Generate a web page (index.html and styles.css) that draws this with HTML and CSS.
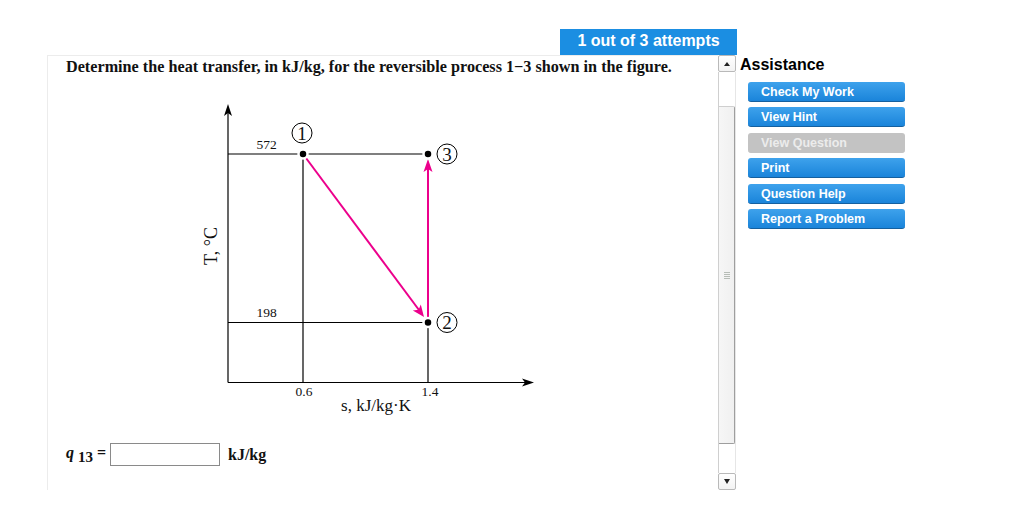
FILE: index.html
```html
<!DOCTYPE html>
<html>
<head>
<meta charset="utf-8">
<link rel="stylesheet" href="styles.css">
</head>
<body>
<div class="page">
  <div class="main">
    <div class="attempts-row"><div class="attempts">1 out of 3 attempts</div></div>
    <div class="content-row">
      <div class="pane">
        <p class="question">Determine the heat transfer, in kJ/kg, for the reversible process 1&minus;3 shown in the figure.</p>
        <svg class="chart" width="360" height="320" viewBox="190 100 360 320" xmlns="http://www.w3.org/2000/svg">
          <g stroke="#000" stroke-width="1.2" fill="none">
            <line x1="228" y1="110" x2="228" y2="382.5"/>
            <line x1="228" y1="382.5" x2="528" y2="382.5"/>
            <line x1="228" y1="154" x2="428" y2="154"/>
            <line x1="228" y1="322.5" x2="428" y2="322.5"/>
            <line x1="303" y1="154" x2="303" y2="382.5"/>
            <line x1="428" y1="322.5" x2="428" y2="382.5"/>
          </g>
          <polygon points="228,104 224,116 228,113 232,116" fill="#000"/>
          <polygon points="534,382.5 522,378.5 525,382.5 522,386.5" fill="#000"/>
          <g stroke="#ec008c" stroke-width="2" fill="none">
            <line x1="303" y1="154" x2="419" y2="310"/>
            <line x1="428" y1="322" x2="428" y2="168"/>
          </g>
          <polygon points="424,317 412.8,310.4 418.6,309.8 420.8,304.4" fill="#ec008c"/>
          <polygon points="428,159 423.5,172 428,169 432.5,172" fill="#ec008c"/>
          <g fill="#000" stroke="#fff" stroke-width="2.5">
            <circle cx="303" cy="154" r="4.5"/>
            <circle cx="428" cy="154" r="4.5"/>
            <circle cx="428" cy="322.5" r="4.5"/>
          </g>
          <g fill="none" stroke="#000" stroke-width="1">
            <circle cx="302" cy="133" r="10"/>
            <circle cx="447" cy="154" r="10"/>
            <circle cx="447" cy="322.5" r="10"/>
          </g>
          <g class="svgtxt" font-size="19" text-anchor="middle">
            <text x="302" y="139.5">1</text>
            <text x="447" y="160.5">3</text>
            <text x="447" y="329">2</text>
          </g>
          <g class="svgtxt" font-size="13.5" text-anchor="middle">
            <text x="266.5" y="148.5">572</text>
            <text x="266.5" y="316.5">198</text>
            <text x="304" y="396">0.6</text>
            <text x="430" y="396">1.4</text>
          </g>
          <text class="svgtxt" x="376" y="411" font-size="17" text-anchor="middle">s, kJ/kg·K</text>
          <text class="svgtxt" font-size="18" text-anchor="middle" transform="translate(217 246) rotate(-90)">T, °C</text>
        </svg>
        <div class="answer">
          <span class="qlabel"><i>q</i> <sub>13</sub> =</span>
          <span class="input"></span>
          <span class="unit">kJ/kg</span>
        </div>
      </div>
      <div class="scrollbar">
        <div class="sb-btn"><span class="tri-up"></span></div>
        <div class="sb-track">
          <div class="sb-thumb"><span class="grip"></span></div>
        </div>
        <div class="sb-btn"><span class="tri-down"></span></div>
      </div>
    </div>
  </div>
  <aside class="assist">
    <h2 class="assist-title">Assistance</h2>
    <div class="btns">
      <div class="btn">Check My Work</div>
      <div class="btn">View Hint</div>
      <div class="btn disabled">View Question</div>
      <div class="btn">Print</div>
      <div class="btn">Question Help</div>
      <div class="btn">Report a Problem</div>
    </div>
  </aside>
</div>
</body>
</html>
```
FILE: styles.css
```css
html, body {
  margin: 0;
  padding: 0;
  background: #fff;
}
body {
  font-family: "Liberation Sans", Arial, sans-serif;
  width: 1024px;
  height: 507px;
  overflow: hidden;
}
.page {
  display: flex;
  padding: 29px 0 0 47px;
}
.main {
  width: 690px;
  display: flex;
  flex-direction: column;
}
.attempts-row {
  display: flex;
  justify-content: flex-end;
}
.attempts {
  width: 177px;
  height: 26px;
  background: #1b8ee2;
  color: #fff;
  font-size: 16px;
  font-weight: bold;
  display: flex;
  align-items: center;
  justify-content: center;
  box-sizing: border-box;
  padding-bottom: 2px;
}
.content-row {
  display: flex;
  height: 435px;
}
.pane {
  width: 671px;
  box-sizing: border-box;
  border-top: 1px solid #ececec;
  border-left: 1px solid #ececec;
  padding-left: 18px;
}
.question {
  margin: 2px 0 0 0;
  font-family: "Liberation Serif", "Times New Roman", serif;
  font-weight: bold;
  font-size: 16.2px;
  line-height: 19px;
  color: #111;
}
.chart {
  display: block;
  margin: 23px 0 0 124px;
}
.svgtxt {
  font-family: "Liberation Serif", "Times New Roman", serif;
  fill: #111;
}
.answer {
  display: flex;
  align-items: center;
  margin-top: 23px;
  font-family: "Liberation Serif", "Times New Roman", serif;
  font-weight: bold;
  font-size: 16px;
  color: #111;
}
.qlabel {
  white-space: nowrap;
  width: 44px;
}
.qlabel sub {
  font-size: 15px;
  vertical-align: -4px;
}
.input {
  width: 110px;
  height: 23px;
  box-sizing: border-box;
  border: 1px solid #8a8a8a;
  background: #fff;
  margin-right: 8px;
}
.unit {
  font-size: 16px;
}
.scrollbar {
  width: 18px;
  display: flex;
  flex-direction: column;
  box-sizing: border-box;
}
.sb-btn {
  height: 17px;
  border: 1px solid #b9b9b9;
  border-radius: 2px;
  background: linear-gradient(#ffffff, #f3f3f3);
  display: flex;
  align-items: center;
  justify-content: center;
  box-sizing: border-box;
}
.tri-up {
  width: 0; height: 0;
  border-left: 3px solid transparent;
  border-right: 3px solid transparent;
  border-bottom: 4px solid #222;
}
.tri-down {
  width: 0; height: 0;
  border-left: 3.5px solid transparent;
  border-right: 3.5px solid transparent;
  border-top: 5px solid #222;
}
.sb-track {
  flex: 1;
  border-left: 1px solid #cfcfcf;
  border-right: 1px solid #e6e6e6;
  padding-top: 34px;
  padding-bottom: 29px;
  background: #fff;
  display: flex;
}
.sb-thumb {
  flex: 1;
  background: linear-gradient(90deg, #f6f6f6, #f0f0f0);
  border-top: 1px solid #cfcfcf;
  border-right: 1px solid #9e9e9e;
  border-bottom: 1px solid #9e9e9e;
  border-radius: 0 2px 2px 0;
  display: flex;
  align-items: center;
  justify-content: center;
}
.grip {
  width: 6px;
  height: 7px;
  background: repeating-linear-gradient(#b7bdb7 0 1px, transparent 1px 2px);
}
.assist {
  margin-left: 3px;
  padding-top: 26px;
}
.assist-title {
  margin: 0;
  font-size: 16px;
  line-height: 19px;
  font-weight: bold;
  color: #000;
}
.btns {
  display: flex;
  flex-direction: column;
  gap: 5.4px;
  margin: 8px 0 0 8px;
}
.btn {
  width: 157px;
  height: 20px;
  box-sizing: border-box;
  border-radius: 3px;
  background: linear-gradient(#3ea2ec, #1a84da);
  border-bottom: 1px solid #15609f;
  color: #fff;
  font-size: 12.5px;
  font-weight: bold;
  line-height: 20px;
  padding-left: 13px;
}
.btn.disabled {
  background: #c3c3c3;
  border-bottom: 1px solid #c3c3c3;
  color: #ececec;
}
```
